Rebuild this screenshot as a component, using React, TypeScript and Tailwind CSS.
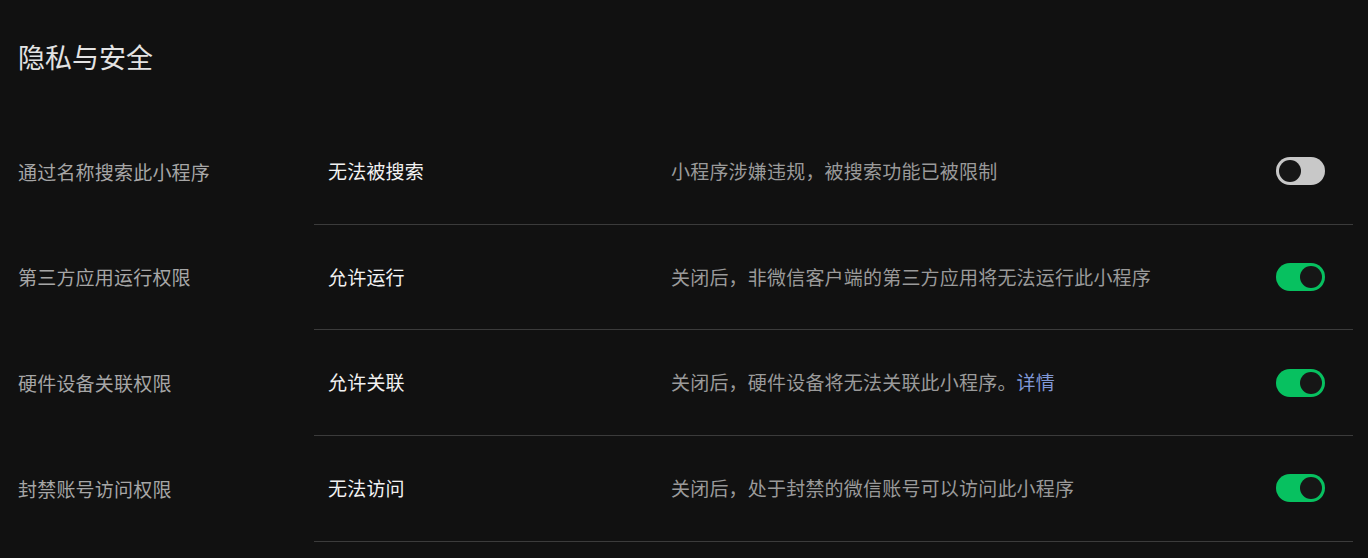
import { useState } from 'react'

const rows = [
  { label: '通过名称搜索此小程序', value: '无法被搜索', desc: '小程序涉嫌违规，被搜索功能已被限制', on: false },
  { label: '第三方应用运行权限', value: '允许运行', desc: '关闭后，非微信客户端的第三方应用将无法运行此小程序', on: true },
  { label: '硬件设备关联权限', value: '允许关联', desc: '关闭后，硬件设备将无法关联此小程序。', link: '详情', on: true },
  { label: '封禁账号访问权限', value: '无法访问', desc: '关闭后，处于封禁的微信账号可以访问此小程序', on: true },
]

function Toggle({ on, onClick }: { on: boolean; onClick: () => void }) {
  return (
    <button
      onClick={onClick}
      className={`w-[49px] h-[28px] rounded-full flex items-center px-[3px] ${
        on ? 'bg-[#07c160] justify-end' : 'bg-[#c8c8c8] justify-start'
      }`}
    >
      <span className="w-[22px] h-[22px] rounded-full bg-[#161616]"></span>
    </button>
  )
}

export default function App() {
  const [state, setState] = useState(rows.map(r => r.on))

  return (
    <div
      className="min-h-screen bg-[#111111] pl-[18px] pr-[15px] pt-[39px]"
      style={{ fontFamily: '"Noto Sans CJK SC", "Noto Sans", sans-serif' }}
    >
      <h1 className="text-[27px] leading-[36px] text-[#e3e3e3] font-normal">隐私与安全</h1>

      <div className="mt-[44px]">
        {rows.map((row, i) => (
          <div key={i} className="flex">
            <div className="w-[296px] flex items-center text-[19px] text-[#a6a6a6] tracking-[0.2px]">
              {row.label}
            </div>
            <div className="flex-1 h-[105.7px] flex items-center border-b border-[#3b3b3b] pl-[14px] pr-[28px]">
              <div className="w-[343px] text-[19px] text-[#f2f2f2] font-normal tracking-[0.2px]">{row.value}</div>
              <div className="flex-1 text-[19px] text-[#9a9a9a] tracking-[0.2px]">
                {row.desc}
                {row.link && <a className="text-[#8098d6] cursor-pointer">{row.link}</a>}
              </div>
              <Toggle
                on={state[i]}
                onClick={() => setState(s => s.map((v, j) => (j === i ? !v : v)))}
              />
            </div>
          </div>
        ))}
      </div>
    </div>
  )
}
